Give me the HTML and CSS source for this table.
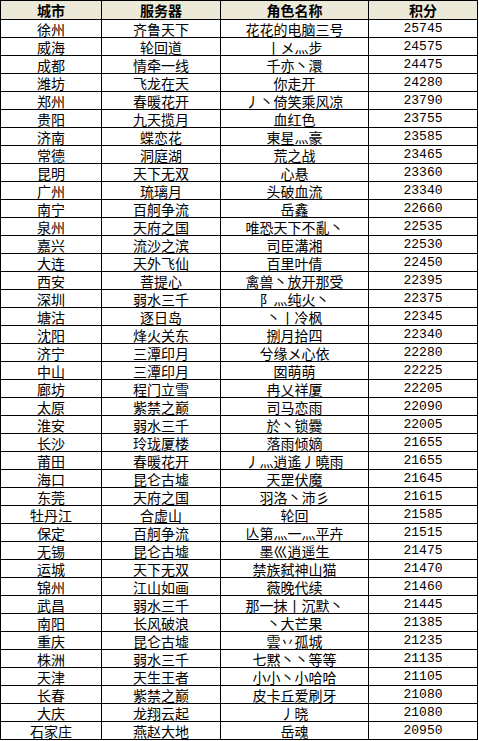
FILE: index.html
```html
<!DOCTYPE html>
<html lang="zh-CN">
<head>
<meta charset="utf-8">
<title>积分排行</title>
<link rel="stylesheet" href="styles.css">
</head>
<body>
<div class="rank">
  <div class="cell head">城市</div><div class="cell head">服务器</div><div class="cell head">角色名称</div><div class="cell head">积分</div>
  <div class="cell">徐州</div><div class="cell">齐鲁天下</div><div class="cell">花花的电脑三号</div><div class="cell num">25745</div>
  <div class="cell">威海</div><div class="cell">轮回道</div><div class="cell">丨メ灬步</div><div class="cell num">24575</div>
  <div class="cell">成都</div><div class="cell">情牵一线</div><div class="cell">千亦丶澴</div><div class="cell num">24475</div>
  <div class="cell">潍坊</div><div class="cell">飞龙在天</div><div class="cell">你走开</div><div class="cell num">24280</div>
  <div class="cell">郑州</div><div class="cell">春暖花开</div><div class="cell">丿丶倚笑乘风凉</div><div class="cell num">23790</div>
  <div class="cell">贵阳</div><div class="cell">九天揽月</div><div class="cell">血红色</div><div class="cell num">23755</div>
  <div class="cell">济南</div><div class="cell">蝶恋花</div><div class="cell">東星灬豪</div><div class="cell num">23585</div>
  <div class="cell">常德</div><div class="cell">洞庭湖</div><div class="cell">荒之战</div><div class="cell num">23465</div>
  <div class="cell">昆明</div><div class="cell">天下无双</div><div class="cell">心悬</div><div class="cell num">23360</div>
  <div class="cell">广州</div><div class="cell">琉璃月</div><div class="cell">头破血流</div><div class="cell num">23340</div>
  <div class="cell">南宁</div><div class="cell">百舸争流</div><div class="cell">岳鑫</div><div class="cell num">22660</div>
  <div class="cell">泉州</div><div class="cell">天府之国</div><div class="cell">唯恐天下不亂丶</div><div class="cell num">22535</div>
  <div class="cell">嘉兴</div><div class="cell">流沙之滨</div><div class="cell">司臣溝湘</div><div class="cell num">22530</div>
  <div class="cell">大连</div><div class="cell">天外飞仙</div><div class="cell">百里叶倩</div><div class="cell num">22450</div>
  <div class="cell">西安</div><div class="cell">菩提心</div><div class="cell">禽兽丶放开那受</div><div class="cell num">22395</div>
  <div class="cell">深圳</div><div class="cell">弱水三千</div><div class="cell">阝灬纯火丶</div><div class="cell num">22375</div>
  <div class="cell">塘沽</div><div class="cell">逐日岛</div><div class="cell">丶丨冷枫</div><div class="cell num">22345</div>
  <div class="cell">沈阳</div><div class="cell">烽火关东</div><div class="cell">捌月拾四</div><div class="cell num">22340</div>
  <div class="cell">济宁</div><div class="cell">三潭印月</div><div class="cell">兮缘メ心依</div><div class="cell num">22280</div>
  <div class="cell">中山</div><div class="cell">三潭印月</div><div class="cell">囡萌萌</div><div class="cell num">22225</div>
  <div class="cell">廊坊</div><div class="cell">程门立雪</div><div class="cell">冉乂祥厦</div><div class="cell num">22205</div>
  <div class="cell">太原</div><div class="cell">紫禁之巅</div><div class="cell">司马恋雨</div><div class="cell num">22090</div>
  <div class="cell">淮安</div><div class="cell">弱水三千</div><div class="cell">於丶锁爨</div><div class="cell num">22005</div>
  <div class="cell">长沙</div><div class="cell">玲珑厦楼</div><div class="cell">落雨倾嫡</div><div class="cell num">21655</div>
  <div class="cell">莆田</div><div class="cell">春暖花开</div><div class="cell">丿灬逍遙丿曉雨</div><div class="cell num">21655</div>
  <div class="cell">海口</div><div class="cell">昆仑古墟</div><div class="cell">天罡伏魔</div><div class="cell num">21645</div>
  <div class="cell">东莞</div><div class="cell">天府之国</div><div class="cell">羽洛丶沛彡</div><div class="cell num">21615</div>
  <div class="cell">牡丹江</div><div class="cell">合虚山</div><div class="cell">轮回</div><div class="cell num">21585</div>
  <div class="cell">保定</div><div class="cell">百舸争流</div><div class="cell">亾第灬一灬平卉</div><div class="cell num">21515</div>
  <div class="cell">无锡</div><div class="cell">昆仑古墟</div><div class="cell">墨巛逍遥生</div><div class="cell num">21475</div>
  <div class="cell">运城</div><div class="cell">天下无双</div><div class="cell">禁族弑神山猫</div><div class="cell num">21470</div>
  <div class="cell">锦州</div><div class="cell">江山如画</div><div class="cell">薇晚代续</div><div class="cell num">21460</div>
  <div class="cell">武昌</div><div class="cell">弱水三千</div><div class="cell">那一抹丨沉默丶</div><div class="cell num">21445</div>
  <div class="cell">南阳</div><div class="cell">长风破浪</div><div class="cell">丶大芒果</div><div class="cell num">21385</div>
  <div class="cell">重庆</div><div class="cell">昆仑古墟</div><div class="cell">雲丷孤城</div><div class="cell num">21235</div>
  <div class="cell">株洲</div><div class="cell">弱水三千</div><div class="cell">七黙丶丶等等</div><div class="cell num">21135</div>
  <div class="cell">天津</div><div class="cell">天生王者</div><div class="cell">小小丶小哈哈</div><div class="cell num">21105</div>
  <div class="cell">长春</div><div class="cell">紫禁之巅</div><div class="cell">皮卡丘爱刷牙</div><div class="cell num">21080</div>
  <div class="cell">大庆</div><div class="cell">龙翔云起</div><div class="cell">丿晓</div><div class="cell num">21080</div>
  <div class="cell">石家庄</div><div class="cell">燕赵大地</div><div class="cell">岳魂</div><div class="cell num">20950</div>
</div>
</body>
</html>
```

FILE: styles.css
```css
html, body {
  margin: 0;
  padding: 0;
  background: #ffffff;
}

.rank {
  display: grid;
  grid-template-columns: 100px 118px 147px 108px;
  grid-template-rows: 18px;
  grid-auto-rows: 17px;
  gap: 1px;
  width: max-content;
  background: #000000;
  border: 1px solid #000000;
  font-family: "Noto Sans CJK SC", "Noto Sans", sans-serif;
  font-size: 14px;
  color: #000000;
}

.cell {
  background: #ffffff;
  display: flex;
  align-items: center;
  justify-content: center;
  line-height: 14px;
  white-space: nowrap;
}

.head {
  background: #ece9d8;
  font-weight: bold;
}

.num {
  font-family: "Liberation Mono", "DejaVu Sans Mono", monospace;
  font-size: 13px;
}
```
